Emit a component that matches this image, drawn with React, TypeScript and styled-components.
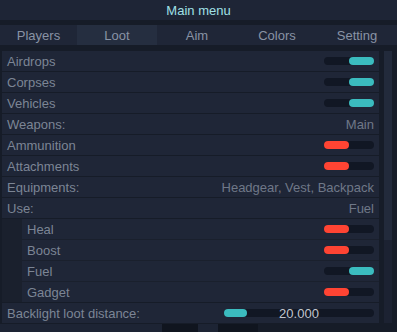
import React from "react";
import styled, { createGlobalStyle } from "styled-components";

const Global = createGlobalStyle`
  html, body { margin: 0; padding: 0; background: #161c28; }
  body { font-family: "Liberation Sans", Arial, sans-serif; }
`;

const Frame = styled.div`
  width: 397px;
  height: 332px;
  overflow: hidden;
  background: #161c28;
  display: flex;
  flex-direction: column;
  font-size: 13px;
`;

const TitleBar = styled.div`
  height: 20px;
  flex: none;
  background: #1e2536;
  color: #a0e0e7;
  display: flex;
  align-items: center;
  justify-content: center;
  margin-bottom: 5px;
`;

const Tabs = styled.div`
  height: 20px;
  flex: none;
  display: grid;
  grid-template-columns: 77px repeat(4, 80px);
  background: #1f2637;
  margin-bottom: 6px;
`;

const Tab = styled.div<{ $active?: boolean }>`
  display: flex;
  align-items: center;
  justify-content: center;
  color: #8993a5;
  background: ${(p) => (p.$active ? "#252e40" : "transparent")};
`;

const Body = styled.div`
  display: grid;
  grid-template-columns: 377px 8px;
  column-gap: 5px;
  padding-left: 2px;
  flex: none;
`;

const List = styled.div`
  display: flex;
  flex-direction: column;
  gap: 1px;
`;

const Group = styled.div`
  display: flex;
  flex-direction: column;
  gap: 1px;
  padding-left: 20px;
  background: #1a202d;
`;

const Row = styled.div`
  height: 20px;
  background: #1f2637;
  display: flex;
  align-items: center;
  justify-content: space-between;
  padding: 0 5px;
  color: #7c8595;
`;

const Value = styled.span`
  color: #6f7888;
`;

const Toggle = styled.div<{ $on?: boolean }>`
  width: 50px;
  height: 8px;
  border-radius: 4px;
  background: #111724;
  display: flex;
  justify-content: ${(p) => (p.$on ? "flex-end" : "flex-start")};
`;

const Knob = styled.div<{ $on?: boolean }>`
  width: 25px;
  height: 8px;
  border-radius: 4px;
  background: ${(p) => (p.$on ? "#3bbcbf" : "#ff4433")};
`;

const Slider = styled.div`
  width: 150px;
  display: grid;
  align-items: center;
`;

const SliderTrack = styled.div`
  grid-area: 1 / 1;
  height: 8px;
  border-radius: 4px;
  background: #111724;
  display: flex;
`;

const SliderFill = styled.div`
  height: 8px;
  border-radius: 4px;
  background: #3bbcbf;
`;

const SliderValue = styled.span`
  grid-area: 1 / 1;
  text-align: center;
  color: #c2c6cf;
  font-size: 13px;
`;

const Scroll = styled.div`
  display: flex;
  flex-direction: column;
  background: #1c2232;
`;

const Thumb = styled.div`
  height: 189px;
  background: #222a3b;
`;

const Footer = styled.div`
  flex: none;
  height: 9px;
  margin-top: 1px;
  display: flex;
  background: #161c28;
`;

const FooterBlock = styled.div<{ $w: number; $dark?: boolean }>`
  width: ${(p) => p.$w}px;
  background: ${(p) => (p.$dark ? "#10151f" : "#1d2434")};
`;

const rows: { label: string; on?: boolean; value?: string }[] = [
  { label: "Airdrops", on: true },
  { label: "Corpses", on: true },
  { label: "Vehicles", on: true },
  { label: "Weapons:", value: "Main" },
  { label: "Ammunition", on: false },
  { label: "Attachments", on: false },
  { label: "Equipments:", value: "Headgear, Vest, Backpack" },
  { label: "Use:", value: "Fuel" },
];

const useRows: { label: string; on: boolean }[] = [
  { label: "Heal", on: false },
  { label: "Boost", on: false },
  { label: "Fuel", on: true },
  { label: "Gadget", on: false },
];

const Switch = ({ on }: { on: boolean }) => (
  <Toggle $on={on}>
    <Knob $on={on} />
  </Toggle>
);

export default function App() {
  const tabs = ["Players", "Loot", "Aim", "Colors", "Setting"];
  const distance = 20000;
  const maxDistance = 130000;
  return (
    <Frame>
      <Global />
      <TitleBar>Main menu</TitleBar>
      <Tabs>
        {tabs.map((t) => (
          <Tab key={t} $active={t === "Loot"}>
            {t}
          </Tab>
        ))}
      </Tabs>
      <Body>
        <List>
          {rows.map((r) => (
            <Row key={r.label}>
              <span>{r.label}</span>
              {r.value !== undefined ? <Value>{r.value}</Value> : <Switch on={!!r.on} />}
            </Row>
          ))}
          <Group>
            {useRows.map((r) => (
              <Row key={r.label}>
                <span>{r.label}</span>
                <Switch on={r.on} />
              </Row>
            ))}
          </Group>
          <Row>
            <span>Backlight loot distance:</span>
            <Slider>
              <SliderTrack>
                <SliderFill style={{ width: `${Math.max(23, (distance / maxDistance) * 150)}px` }} />
              </SliderTrack>
              <SliderValue>20.000</SliderValue>
            </Slider>
          </Row>
        </List>
        <Scroll>
          <Thumb />
        </Scroll>
      </Body>
      <Footer>
        <FooterBlock $w={162} />
        <FooterBlock $w={36} $dark />
        <FooterBlock $w={20} />
        <FooterBlock $w={40} $dark />
      </Footer>
    </Frame>
  );
}
